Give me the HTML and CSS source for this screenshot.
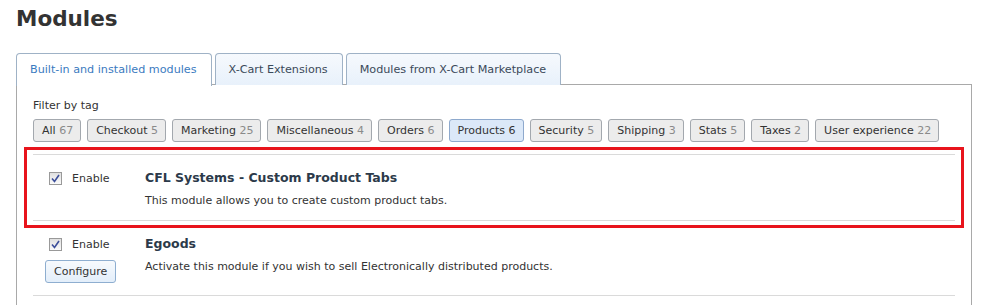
FILE: index.html
```html
<!DOCTYPE html>
<html lang="en">
<head>
  <meta charset="UTF-8">
  <title>Modules</title>
  <link rel="stylesheet" href="styles.css">
</head>
<body>

  <h1>Modules</h1>

  <div class="tabs">
    <div class="tab active">Built-in and installed modules</div>
    <div class="tab">X-Cart Extensions</div>
    <div class="tab">Modules from X-Cart Marketplace</div>
  </div>

  <div class="panel">
    <div class="filter-label">Filter by tag</div>
    <div class="tags">
      <span class="tag">All <em>67</em></span>
      <span class="tag">Checkout <em>5</em></span>
      <span class="tag">Marketing <em>25</em></span>
      <span class="tag">Miscellaneous <em>4</em></span>
      <span class="tag">Orders <em>6</em></span>
      <span class="tag selected">Products <em>6</em></span>
      <span class="tag">Security <em>5</em></span>
      <span class="tag">Shipping <em>3</em></span>
      <span class="tag">Stats <em>5</em></span>
      <span class="tag">Taxes <em>2</em></span>
      <span class="tag">User experience <em>22</em></span>
    </div>

    <div class="highlight">
      <div class="module first">
        <div class="module-actions">
          <label class="enable">
            <span class="check"><svg width="9" height="9" viewBox="0 0 9 9"><path d="M1 4.5 L3.5 7.5 L8 1" fill="none" stroke="#3c4e9a" stroke-width="1.6"/></svg></span>
            Enable
          </label>
        </div>
        <div class="module-info">
          <div class="module-name">CFL Systems - Custom Product Tabs</div>
          <div class="module-desc">This module allows you to create custom product tabs.</div>
        </div>
      </div>
    </div>

    <div class="module">
      <div class="module-actions">
        <label class="enable">
          <span class="check"><svg width="9" height="9" viewBox="0 0 9 9"><path d="M1 4.5 L3.5 7.5 L8 1" fill="none" stroke="#3c4e9a" stroke-width="1.6"/></svg></span>
          Enable
        </label>
        <button type="button" class="configure">Configure</button>
      </div>
      <div class="module-info">
        <div class="module-name">Egoods</div>
        <div class="module-desc">Activate this module if you wish to sell Electronically distributed products.</div>
      </div>
    </div>
  </div>

</body>
</html>
```

FILE: styles.css
```css
body {
  margin: 0;
  padding: 0 15px 0 16px;
  font-family: "DejaVu Sans", Verdana, sans-serif;
  font-size: 11px;
  color: #333;
  background-color: #fff;
}
h1 {
  margin: 0;
  padding-top: 4px;
  height: 49px;
  font-size: 21.5px;
  font-weight: bold;
  color: #333;
  line-height: 30px;
}
.tabs {
  display: flex;
  gap: 3px;
  border-bottom: 1px solid #a9a9a9;
  height: 31px;
}
.tab {
  padding: 0 14px 0 13px;
  height: 31px;
  line-height: 31px;
  border: 1px solid #9fb2c6;
  border-bottom: none;
  border-radius: 4px 4px 0 0;
  background: linear-gradient(#f6f9fd, #e8f1fb);
  color: #3b4a5a;
  font-size: 11.2px;
}
.tab.active {
  background: #fff;
  color: #3b7bbf;
  height: 32px;
  margin-bottom: -1px;
}
.panel {
  border-left: 1px solid #a9a9a9;
  border-right: 1px solid #a9a9a9;
  padding: 13px 0 9px 0;
}
.filter-label {
  padding-left: 16px;
  line-height: 16px;
  font-size: 11px;
}
.tags {
  display: flex;
  gap: 6px;
  padding-left: 16px;
  margin-top: 5px;
}
.tag {
  height: 21px;
  line-height: 21px;
  padding: 0 7px 0 8px;
  border: 1px solid #a3a8ae;
  border-radius: 3px;
  background-color: #ececec;
  color: #333;
  font-size: 11px;
}
.tag em {
  font-style: normal;
  color: #8a8a8a;
}
.tag.selected {
  background-color: #dbe8f8;
  border-color: #8ea9cd;
}
.tag.selected em {
  color: #333;
}
.highlight {
  margin: 5px 7px 0 7px;
  border: 3px solid #e8141c;
  padding: 4px 6px 4px 6px;
}
.module {
  display: flex;
  margin: 0 16px;
  border-bottom: 1px solid #dadada;
  padding: 8px 0 12px 12px;
}
.highlight .module {
  margin: 0;
  border-top: 1px solid #dadada;
  padding: 15px 0 11px 12px;
}
.module-actions {
  width: 100px;
}
.enable {
  display: flex;
  align-items: center;
  gap: 10px;
  padding-left: 4px;
  height: 16px;
}
.check {
  display: inline-flex;
  align-items: center;
  justify-content: center;
  width: 11px;
  height: 11px;
  border: 1px solid #999;
  background: linear-gradient(#e0e0e0, #fafafa);
}
.configure {
  margin-top: 8px;
  height: 23px;
  padding: 0 8px;
  border: 1px solid #8eaed0;
  border-radius: 3px;
  background: linear-gradient(#f7fafd, #e3eefa);
  color: #333;
  font-family: inherit;
  font-size: 11px;
}
.module-info {
  flex: 1;
}
.module-name {
  font-size: 12.5px;
  font-weight: bold;
  color: #2c3a4a;
  line-height: 16px;
}
.module-desc {
  margin-top: 7px;
  line-height: 16px;
}
```
